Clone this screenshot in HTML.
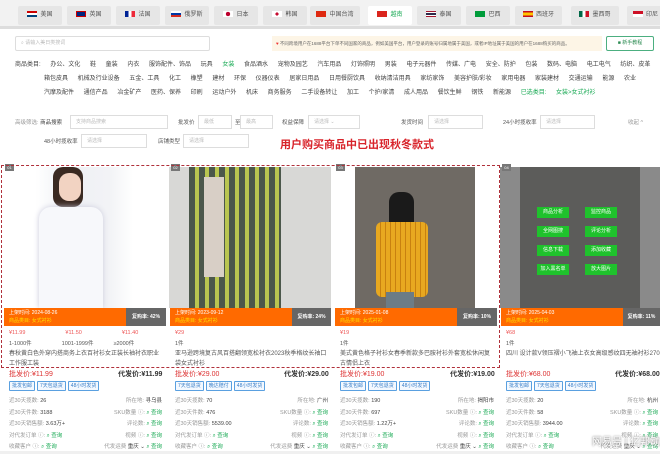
<!DOCTYPE html>
<html><head><meta charset="utf-8"><style>
*{margin:0;padding:0;box-sizing:border-box}
body{width:660px;height:451px;overflow:hidden;background:#f0f0f0;font-family:"Liberation Sans","Noto Sans CJK SC",sans-serif;position:relative;font-size:6px;color:#333}
.a{position:absolute;white-space:nowrap}
.tab{position:absolute;top:6px;height:19px;width:44px;background:#e6e6e6;border-radius:2px;font-size:6px;color:#555;text-align:center;line-height:19px}
.tab i{display:inline-block;width:10px;height:6px;vertical-align:-1px;margin-right:3px}
.in{position:absolute;height:14px;border:1px solid #ddd;background:#fff;font-size:5px;color:#bbb;padding-left:5px;line-height:12px}
.cat{position:absolute;font-size:6px;color:#444;white-space:nowrap;word-spacing:8px}
.img{position:absolute;top:167px;height:141px;overflow:hidden}
.bar{position:absolute;top:308px;height:18px;background:#ff6a00;color:#fff;font-size:5px;line-height:8px;padding:1px 5px}
.bar b{color:#ffe000;font-weight:normal}
.rp{position:absolute;top:308px;height:18px;background:#666;color:#fff;font-size:5px;line-height:18px;text-align:center;font-weight:bold}
.g{position:absolute;width:32px;height:11px;background:#1fc22c;color:#fff;font-size:5px;text-align:center;line-height:11px}
.num{position:absolute;top:164px;width:9px;height:7px;background:#777;color:#fff;font-size:4px;text-align:center;line-height:7px}
.t{position:absolute;font-size:5.5px;color:#555;white-space:nowrap}
.tag{display:inline-block;border:1px solid #5aa0e0;color:#3a7fc8;font-size:5px;padding:0 2px;margin-right:2px;height:10px;line-height:8px;border-radius:1px;background:#f4f9ff}
.q{color:#1aaa55}
</style></head><body>
<div class="a" style="left:0;top:0;width:660px;height:28px;background:#f2f2f2"></div>
<div class="tab" style="left:18px"><i style="background:linear-gradient(#c00 0 33%,#fff 33% 66%,#00427a 66%)"></i>美国</div>
<div class="tab" style="left:67px"><i style="background:#00247d;box-shadow:inset 0 0 0 1px #c00"></i>英国</div>
<div class="tab" style="left:116px"><i style="background:linear-gradient(90deg,#002395 33%,#fff 33% 66%,#ed2939 66%)"></i>法国</div>
<div class="tab" style="left:165px"><i style="background:linear-gradient(#fff 33%,#0039a6 33% 66%,#d52b1e 66%)"></i>俄罗斯</div>
<div class="tab" style="left:214px"><i style="background:radial-gradient(circle,#bc002d 35%,#fff 40%)"></i>日本</div>
<div class="tab" style="left:263px"><i style="background:radial-gradient(circle,#c60c30 25%,#fff 30%)"></i>韩国</div>
<div class="tab" style="left:310px;width:50px"><i style="background:#de2910"></i>中国台湾</div>
<div class="tab" style="left:368px;background:#fff;color:#1aaa55"><i style="background:#da251d"></i>越南</div>
<div class="tab" style="left:417px"><i style="background:linear-gradient(#a51931 16%,#fff 16% 33%,#2d2a4a 33% 66%,#fff 66% 83%,#a51931 83%)"></i>泰国</div>
<div class="tab" style="left:466px"><i style="background:#009c3b"></i>巴西</div>
<div class="tab" style="left:515px;width:47px"><i style="background:linear-gradient(#c60b1e 25%,#ffc400 25% 75%,#c60b1e 75%)"></i>西班牙</div>
<div class="tab" style="left:571px;width:48px"><i style="background:linear-gradient(90deg,#006847 33%,#fff 33% 66%,#ce1126 66%)"></i>墨西哥</div>
<div class="tab" style="left:627px;width:40px;text-align:left;padding-left:6px"><i style="background:linear-gradient(#ce1126 50%,#fff 50%)"></i>印尼</div>
<div class="a" style="left:0;top:26px;width:660px;height:3px;background:#ddd"></div>
<div class="a" style="left:0;top:29px;width:660px;height:133px;background:#fff"></div>
<div class="in" style="left:15px;top:36px;width:195px;height:15px;line-height:13px;border-radius:2px">⌕ 请输入美日类搜词</div>
<div class="a" style="left:272px;top:36px;width:330px;height:15px;background:#fdf5e6;font-size:4.5px;color:#666;line-height:15px;padding-left:4px"><span style="color:#e33">♥</span> 不同跨境用户在1688平台下单不同国家的商品，例如美国平台，用户登录的账号归属地属于美国，或者IP地址属于美国的用户在1688购买的商品。</div>
<div class="a" style="left:606px;top:36px;width:48px;height:15px;border:1px solid #4caf80;border-radius:2px;font-size:5px;color:#2a8a50;text-align:center;line-height:13px">■ 新手教程</div>
<div class="cat" style="left:15px;top:59px">商品类目: 办公、文化 鞋 童装 内衣 服饰配件、饰品 玩具 <span style="color:#1aaa55">女装</span> 食品酒水 宠物及园艺 汽车用品 灯饰照明 男装 电子元器件 传媒、广电 安全、防护 包装 数码、电脑 电工电气 纺织、皮革</div>
<div class="cat" style="left:44px;top:73px">箱包皮具 机械及行业设备 五金、工具 化工 橡塑 建材 环保 仪器仪表 居家日用品 日用餐厨饮具 收纳清洁用具 家纺家饰 美容护肤/彩妆 家用电器 家装建材 交通运输 能源 农业</div>
<div class="cat" style="left:44px;top:87px">汽摩及配件 通信产品 冶金矿产 医药、保养 印刷 运动户外 机床 商务服务 二手设备转让 加工 个护/家清 成人用品 餐饮生鲜 钢铁 新能源 <span style="color:#1aaa55">已选类目: 女装&gt;女式衬衫</span></div>
<div class="t" style="left:15px;top:118px;color:#999">高级筛选: <span style="color:#444">商品搜索</span></div>
<div class="in" style="left:70px;top:115px;width:98px">支持商品搜索</div>
<div class="t" style="left:178px;top:118px">批发价</div>
<div class="in" style="left:198px;top:115px;width:34px">最低</div>
<div class="t" style="left:235px;top:118px">至</div>
<div class="in" style="left:240px;top:115px;width:33px">最高</div>
<div class="t" style="left:282px;top:118px">权益保障</div>
<div class="in" style="left:308px;top:115px;width:52px">请选择 ⌄</div>
<div class="t" style="left:401px;top:118px">发货时间</div>
<div class="in" style="left:428px;top:115px;width:55px">请选择</div>
<div class="t" style="left:503px;top:118px">24小时揽收率</div>
<div class="in" style="left:540px;top:115px;width:55px">请选择</div>
<div class="t" style="left:628px;top:118px;color:#999">收起 ^</div>
<div class="t" style="left:44px;top:137px">48小时揽收率</div>
<div class="in" style="left:81px;top:134px;width:66px">请选择</div>
<div class="t" style="left:158px;top:137px">店铺类型</div>
<div class="in" style="left:183px;top:134px;width:66px">请选择</div>
<div class="a" style="left:280px;top:136px;font-size:11px;font-weight:bold;color:#d8232a">用户购买商品中已出现秋冬款式</div>

<!-- cards bg -->
<div class="a" style="left:0;top:162px;width:660px;height:289px;background:#fff"></div>
<div class="img" style="left:3px;width:163px;background:linear-gradient(90deg,#fff 20%,#eef0f4 40%,#f2f3f6 65%,#fff 80%)"><div class="a" style="left:50px;top:0;width:30px;height:40px;background:#3a2a22;border-radius:10px"></div><div class="a" style="left:56px;top:6px;width:22px;height:28px;background:#f2d3c2;border-radius:10px"></div><div class="a" style="left:36px;top:40px;width:64px;height:101px;background:#f7f8fb;border-radius:12px 12px 0 0;box-shadow:0 0 6px #ccd"></div></div>
<div class="img" style="left:169px;width:162px;background:#d8d8d6"><div class="a" style="left:20px;top:0;width:92px;height:141px;background:repeating-linear-gradient(90deg,#3c4a3c 0 6px,#b6c442 6px 10px),#3c4a3c;opacity:.9"></div><div class="a" style="left:35px;top:10px;width:20px;height:100px;background:#d8cfc6"></div></div>
<div class="img" style="left:334px;width:163px;background:#fff"><div class="a" style="left:21px;top:0;width:120px;height:141px;background:#6f6a64"></div><div class="a" style="left:55px;top:25px;width:25px;height:40px;background:#1a1a1a;border-radius:10px"></div><div class="a" style="left:42px;top:55px;width:52px;height:75px;background:repeating-linear-gradient(90deg,#e8a820 0 4px,#c88010 4px 5px);border-radius:6px"></div><div class="a" style="left:52px;top:125px;width:28px;height:16px;background:#6c7c86"></div></div>
<div class="img" style="left:500px;width:160px;background:#8a8a8a"><div class="a" style="left:20px;top:0;width:120px;height:141px;background:#5c5c5a"></div>
<div class="g" style="left:37px;top:40px">商品分析</div><div class="g" style="left:85px;top:40px">监控商品</div>
<div class="g" style="left:37px;top:59px">全网图搜</div><div class="g" style="left:85px;top:59px">评论分析</div>
<div class="g" style="left:37px;top:78px">信息下载</div><div class="g" style="left:85px;top:78px">添加收藏</div>
<div class="g" style="left:37px;top:97px">加入黑名单</div><div class="g" style="left:85px;top:97px">放大图片</div></div>
<div class="num" style="left:5px">01</div><div class="num" style="left:171px">02</div><div class="num" style="left:336px">03</div><div class="num" style="left:502px">04</div>

<div class="bar" style="left:4px;width:122px">上架时间: 2024-08-26<br><b>商品类目: 女式衬衫</b></div><div class="rp" style="left:126px;width:40px">复购率: 42%</div>
<div class="bar" style="left:170px;width:122px">上架时间: 2023-09-12<br><b>商品类目: 女式衬衫</b></div><div class="rp" style="left:292px;width:39px">复购率: 24%</div>
<div class="bar" style="left:335px;width:122px">上架时间: 2025-01-08<br><b>商品类目: 女式衬衫</b></div><div class="rp" style="left:457px;width:40px">复购率: 10%</div>
<div class="bar" style="left:501px;width:122px">上架时间: 2025-04-03<br><b>商品类目: 女式衬衫</b></div><div class="rp" style="left:623px;width:37px">复购率: 11%</div>

<div class="t" style="left:9px;top:330px;color:#e55">¥11.99<span style="margin-left:40px">¥11.50</span><span style="margin-left:40px">¥11.40</span></div>
<div class="t" style="left:9px;top:339px">1-1000件<span style="margin-left:30px">1001-1999件</span><span style="margin-left:20px">≥2000件</span></div>
<div class="t" style="left:9px;top:349px;font-size:6px;line-height:10px;white-space:normal;width:155px">春秋黄白色外穿内搭商务上衣百衬衫女正装长袖衬衣职业工作服工装</div>
<div class="t" style="left:175px;top:330px;color:#e55">¥29</div><div class="t" style="left:175px;top:339px">1件</div>
<div class="t" style="left:175px;top:349px;font-size:6px;line-height:10px;white-space:normal;width:155px">亚马逊跨境复古风百搭翻领宽松衬衣2023秋季格纹长袖口袋女式衬衫</div>
<div class="t" style="left:340px;top:330px;color:#e55">¥19</div><div class="t" style="left:340px;top:339px">1件</div>
<div class="t" style="left:340px;top:349px;font-size:6px;line-height:10px;white-space:normal;width:155px">美式黄色格子衬衫女春季新款多巴胺衬衫外套宽松休闲复古情侣上衣</div>
<div class="t" style="left:506px;top:330px;color:#e55">¥68</div><div class="t" style="left:506px;top:339px">1件</div>
<div class="t" style="left:506px;top:349px;font-size:6px;line-height:10px">四川 设计款V领压褶小飞袖上衣女高级感纹四无袖衬衫2703</div>

<div class="a" style="left:1px;top:165px;width:499px;height:203px;border:1.5px dashed #b0303a"></div>

<script></script>
<div class="a" style="left:9px;top:369px;font-size:7px;color:#d33">批发价:¥11.99</div><div class="a" style="left:118px;top:369px;font-size:7px;font-weight:bold">代发价:¥11.99</div>
<div class="a" style="left:175px;top:369px;font-size:7px;color:#d33">批发价:¥29.00</div><div class="a" style="left:284px;top:369px;font-size:7px;font-weight:bold">代发价:¥29.00</div>
<div class="a" style="left:340px;top:369px;font-size:7px;color:#d33">批发价:¥19.00</div><div class="a" style="left:450px;top:369px;font-size:7px;font-weight:bold">代发价:¥19.00</div>
<div class="a" style="left:506px;top:369px;font-size:7px;color:#d33">批发价:¥68.00</div><div class="a" style="left:615px;top:369px;font-size:7px;font-weight:bold">代发价:¥68.00</div>

<div class="a" style="left:9px;top:381px"><span class="tag">批发包邮</span><span class="tag">7天包退货</span><span class="tag">48小时发货</span></div>
<div class="a" style="left:175px;top:381px"><span class="tag">7天包退货</span><span class="tag">晚达赔付</span><span class="tag">48小时发货</span></div>
<div class="a" style="left:340px;top:381px"><span class="tag">批发包邮</span><span class="tag">7天包退货</span><span class="tag">48小时发货</span></div>
<div class="a" style="left:506px;top:381px"><span class="tag">批发包邮</span><span class="tag">7天包退货</span><span class="tag">48小时发货</span></div>

<div class="t" style="left:9px;top:396px;line-height:11.5px;color:#999">近30天揽数: <span style="color:#444">26</span><br>近30天件数: <span style="color:#444">3188</span><br>近30天销售额: <span style="color:#444">3.63万+</span><br>对代发订单 ⓘ: <span class="q">⌕ 查询</span><br>收藏客户 ⓘ: <span class="q">⌕ 查询</span></div>
<div class="t" style="left:100px;top:396px;line-height:11.5px;color:#999;text-align:right;width:62px">所在地: <span style="color:#444">寻乌县</span><br>SKU数量 ⓘ: <span class="q">⌕ 查询</span><br>评论数: <span class="q">⌕ 查询</span><br>视频 ⓘ: <span class="q">⌕ 查询</span><br>代发运费 <span style="color:#444">重庆 ⌄</span> <span class="q">⌕ 查询</span></div>
<div class="t" style="left:175px;top:396px;line-height:11.5px;color:#999">近30天揽数: <span style="color:#444">70</span><br>近30天件数: <span style="color:#444">476</span><br>近30天销售额: <span style="color:#444">5539.00</span><br>对代发订单 ⓘ: <span class="q">⌕ 查询</span><br>收藏客户 ⓘ: <span class="q">⌕ 查询</span></div>
<div class="t" style="left:266px;top:396px;line-height:11.5px;color:#999;text-align:right;width:62px">所在地: <span style="color:#444">广州</span><br>SKU数量 ⓘ: <span class="q">⌕ 查询</span><br>评论数: <span class="q">⌕ 查询</span><br>视频 ⓘ: <span class="q">⌕ 查询</span><br>代发运费 <span style="color:#444">重庆 ⌄</span> <span class="q">⌕ 查询</span></div>
<div class="t" style="left:340px;top:396px;line-height:11.5px;color:#999">近30天揽数: <span style="color:#444">190</span><br>近30天件数: <span style="color:#444">697</span><br>近30天销售额: <span style="color:#444">1.22万+</span><br>对代发订单 ⓘ: <span class="q">⌕ 查询</span><br>收藏客户 ⓘ: <span class="q">⌕ 查询</span></div>
<div class="t" style="left:432px;top:396px;line-height:11.5px;color:#999;text-align:right;width:62px">所在地: <span style="color:#444">揭阳市</span><br>SKU数量 ⓘ: <span class="q">⌕ 查询</span><br>评论数: <span class="q">⌕ 查询</span><br>视频 ⓘ: <span class="q">⌕ 查询</span><br>代发运费 <span style="color:#444">重庆 ⌄</span> <span class="q">⌕ 查询</span></div>
<div class="t" style="left:506px;top:396px;line-height:11.5px;color:#999">近30天揽数: <span style="color:#444">20</span><br>近30天件数: <span style="color:#444">58</span><br>近30天销售额: <span style="color:#444">3944.00</span><br>对代发订单 ⓘ: <span class="q">⌕ 查询</span><br>收藏客户 ⓘ: <span class="q">⌕ 查询</span></div>
<div class="t" style="left:596px;top:396px;line-height:11.5px;color:#999;text-align:right;width:62px">所在地: <span style="color:#444">杭州</span><br>SKU数量 ⓘ: <span class="q">⌕ 查询</span><br>评论数: <span class="q">⌕ 查询</span><br>视频 ⓘ: <span class="q">⌕ 查询</span><br>代发运费 <span style="color:#444">重庆 ⌄</span> <span class="q">⌕ 查询</span></div>
<div class="a" style="left:592px;top:433px;font-size:10px;color:#fff;text-shadow:0 0 2px #555">网易号 | 亿邦动力</div>
</body></html>
